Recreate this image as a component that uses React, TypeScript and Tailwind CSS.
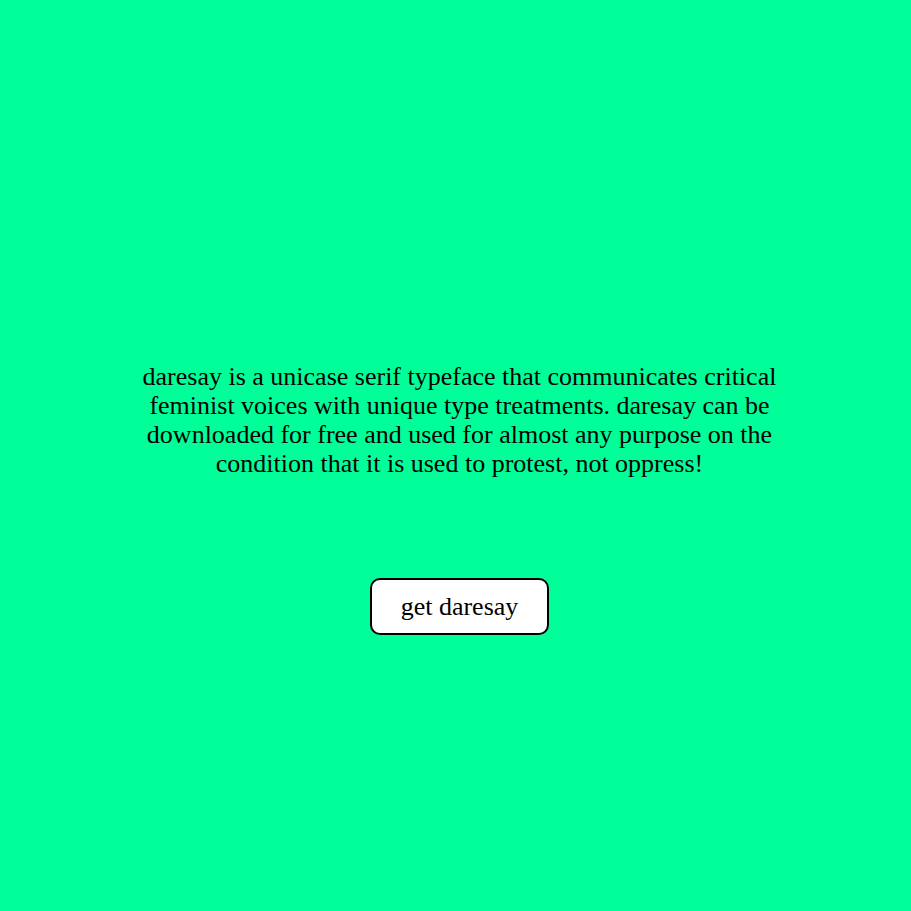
export default function App() {
  return (
    <div className="flex h-[911px] w-full flex-col items-center bg-[#00ff99] pl-2 text-black [font-family:'Liberation_Serif',serif]">
      <p className="mt-[362px] whitespace-nowrap text-center text-[26px] leading-[29px]">
        daresay is a unicase serif typeface that communicates critical
        <br />
        feminist voices with unique type treatments. daresay can be
        <br />
        downloaded for free and used for almost any purpose on the
        <br />
        condition that it is used to protest, not oppress!
      </p>
      <button
        type="button"
        className="mt-[100px] h-[57px] w-[179px] rounded-[10px] border-2 border-black bg-white text-[26px]"
      >
        get daresay
      </button>
    </div>
  )
}
